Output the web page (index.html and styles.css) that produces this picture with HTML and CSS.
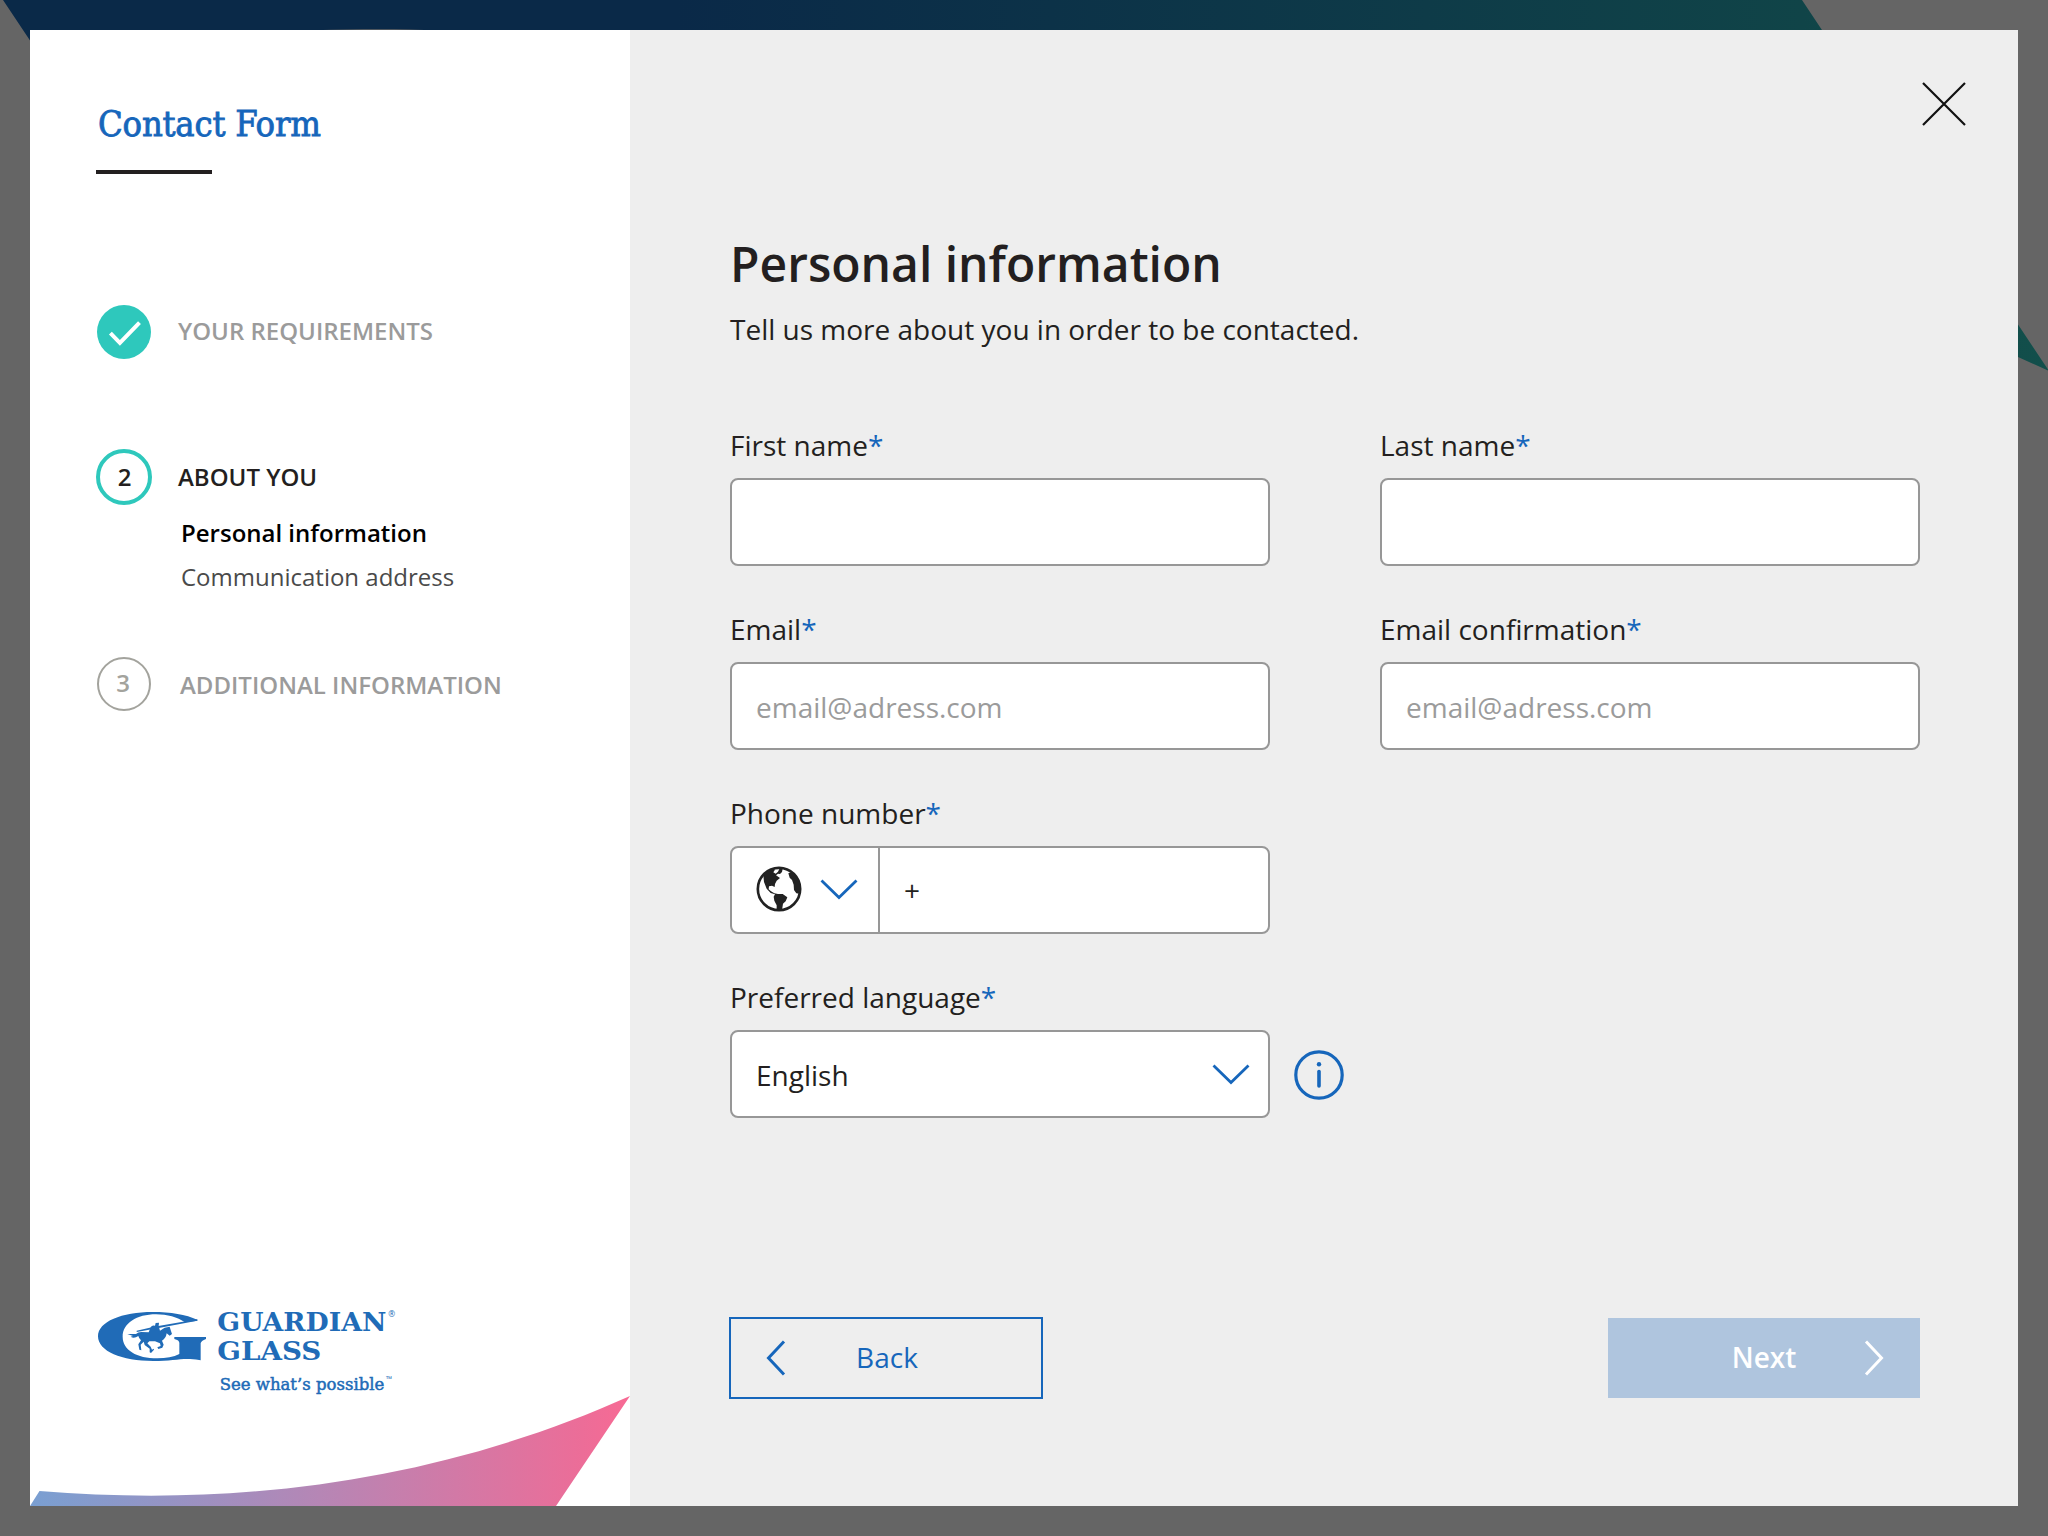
FILE: index.html
```html
<!DOCTYPE html>
<html lang="en">
<head>
<meta charset="utf-8">
<title>Contact Form</title>
<link rel="stylesheet" href="styles.css">
</head>
<body>
<svg class="backdrop" viewBox="0 0 2048 1536" aria-hidden="true">
  <defs>
    <linearGradient id="band" gradientUnits="userSpaceOnUse" x1="0" y1="0" x2="2048" y2="0">
      <stop offset="0" stop-color="#0a2948"/>
      <stop offset=".33" stop-color="#0a2948"/>
      <stop offset=".88" stop-color="#104448"/>
      <stop offset="1" stop-color="#124f4b"/>
    </linearGradient>
  </defs>
  <path fill="url(#band)" d="M3 0H1802L2049 371L2018 357C1500 150 700 29.2 380 29.2C250 29.2 150 40 33 45Z"/>
</svg>

<div class="modal">
  <aside class="sidebar">
    <h1 class="brand-title">Contact Form</h1>
    <div class="rule"></div>

    <ol class="steps">
      <li class="step step-done">
        <svg class="badge" viewBox="0 0 56 56"><circle cx="28" cy="28" r="27" fill="#2ec8bc"/><path d="M14.400 29.200L23.900 38.800L43.500 18.600" fill="none" stroke="#fff" stroke-width="4"/></svg>
        <span class="step-label">YOUR REQUIREMENTS</span>
      </li>
      <li class="step step-current">
        <span class="badge badge-current">2</span>
        <span class="step-label">ABOUT YOU</span>
      </li>
      <li class="substeps">
        <span class="substep substep-active">Personal information</span>
        <span class="substep">Communication address</span>
      </li>
      <li class="step step-next">
        <span class="badge badge-next">3</span>
        <span class="step-label">ADDITIONAL INFORMATION</span>
      </li>
    </ol>

    <svg class="logo" viewBox="0 0 1020 360" role="img" aria-label="Guardian Glass">
      <g fill="#206bb7">
        <path d="M352 89C318 74 272 66 218 66C125 66 54 95 54 139C54 184 125 213 220 213C270 213 305 205 330 207Q350 208 362 211V160Q363 153 378 147V141H283V147Q298 150 298 159V192Q272 205 232 205C170 205 128 180 128 140C128 100 170 73 228 73C262 73 292 81 315 97L352 92Z"/>
        <path d="M170 122L222 110L352 88V92L236 114L170 126Z"/>
        <path d="M142 132Q158 132 168 132Q174 126 184 126L206 127L212 112Q216 104 225 107L227 99L237 98L236 108L240 122L254 113L269 110L272 120L276 132L269 137L260 130Q258 145 246 152L251 164L247 173L235 177L232 172L242 168L240 160L225 154L208 154L202 160L212 170L216 179L221 176L222 179L213 189L209 187L209 176L194 165L191 155L182 164L184 181L178 179L175 163L183 151Q176 143 175 138Q162 147 152 140L159 138Z"/>
        <g font-family="'DejaVu Serif'" font-weight="700">
          <text x="412" y="124" font-size="78" textLength="507" lengthAdjust="spacingAndGlyphs">GUARDIAN</text>
          <text x="412" y="211" font-size="78" textLength="312" lengthAdjust="spacingAndGlyphs">GLASS</text>
        </g>
        <text x="925" y="82" font-size="25" font-family="'Open Sans'">®</text>
        <text x="419" y="300" font-size="52" font-family="'DejaVu Serif'" stroke="#206bb7" stroke-width="1.500" textLength="494" lengthAdjust="spacingAndGlyphs">See what’s possible</text>
        <text x="918" y="275" font-size="24" font-family="'Open Sans'">™</text>
      </g>
    </svg>

    <svg class="swoosh" viewBox="0 0 600 112" aria-hidden="true">
      <defs>
        <linearGradient id="sweep" x1="0" y1="0" x2="1" y2="0">
          <stop offset="0" stop-color="#7a9fd2"/>
          <stop offset=".05" stop-color="#7f9dcf"/>
          <stop offset=".5" stop-color="#b885b4"/>
          <stop offset=".92" stop-color="#ec6d98"/>
          <stop offset="1" stop-color="#f86a94"/>
        </linearGradient>
      </defs>
      <path fill="url(#sweep)" d="M0 112L9.500 97C215 114 415 85 600 2L526 112Z"/>
    </svg>
  </aside>

  <main class="content">
    <button class="close" type="button" aria-label="Close">
      <svg viewBox="0 0 46 46"><path d="M2 2L44 44M44 2L2 44" stroke="#111" stroke-width="2.200" fill="none"/></svg>
    </button>

    <h2 class="heading">Personal information</h2>
    <p class="intro">Tell us more about you in order to be contacted.</p>

    <form class="form">
      <div class="field">
        <label class="label" for="first">First name<span class="req">*</span></label>
        <input class="box" id="first" type="text">
      </div>
      <div class="field">
        <label class="label" for="last">Last name<span class="req">*</span></label>
        <input class="box" id="last" type="text">
      </div>
      <div class="field">
        <label class="label" for="email">Email<span class="req">*</span></label>
        <input class="box" id="email" type="text" placeholder="email@adress.com">
      </div>
      <div class="field">
        <label class="label" for="email2">Email confirmation<span class="req">*</span></label>
        <input class="box" id="email2" type="text" placeholder="email@adress.com">
      </div>
      <div class="field field-left">
        <span class="label">Phone number<span class="req">*</span></span>
        <div class="box phone">
          <div class="country">
            <svg class="globe" viewBox="18 16 138 138">
              <circle cx="87" cy="85" r="63.500" fill="#fff" stroke="#222" stroke-width="8"/>
              <path fill="#222" d="M40 44L60 28L76 26L70 35L77 39L84 33L88 25L98 24L96 34L90 40L84 39L78 44L90 52L80 60L75 70L74 79L66 75L57 77L56 86L63 92L73 98L84 100L98 100L112 110L107 122L99 129L96 148L80 149L80 134L73 120L71 108L75 101L62 97L50 84L42 64Z"/>
              <path fill="#222" d="M115 38Q122 33 130 38L146 56L151 84L148 99L139 98L132 88L131 72L126 58L119 51Z"/>
            </svg>
            <svg class="chevron" viewBox="0 0 38 22"><path d="M1.500 1.500L19 18.500L36.500 1.500" fill="none" stroke="#1666bb" stroke-width="2.800"/></svg>
          </div>
          <span class="prefix">+</span>
        </div>
      </div>
      <div class="field field-left">
        <span class="label">Preferred language<span class="req">*</span></span>
        <div class="select-row">
          <div class="box select">
            <span>English</span>
            <svg class="chevron" viewBox="0 0 38 22"><path d="M1.500 1.500L19 18.500L36.500 1.500" fill="none" stroke="#1666bb" stroke-width="2.800"/></svg>
          </div>
          <svg class="info" viewBox="0 0 50 50"><circle cx="25" cy="25" r="23.200" fill="none" stroke="#1666bb" stroke-width="3.200"/><circle cx="25" cy="14.200" r="2.200" fill="#1666bb"/><path d="M25 21.500V36" stroke="#1666bb" stroke-width="3.600" stroke-linecap="round"/></svg>
        </div>
      </div>
    </form>

    <div class="actions">
      <button class="btn btn-back" type="button">
        <svg class="arrow arrow-back" viewBox="0 0 20 36"><path d="M18 1.500L2.500 18L18 34.500" fill="none" stroke="currentColor" stroke-width="3"/></svg>
        Back
      </button>
      <button class="btn btn-next" type="button">
        Next
        <svg class="arrow arrow-next" viewBox="0 0 20 36"><path d="M2 1.500L17.500 18L2 34.500" fill="none" stroke="currentColor" stroke-width="3"/></svg>
      </button>
    </div>
  </main>
</div>
</body>
</html>
```
FILE: styles.css
```css
* {
  box-sizing: border-box;
}

body {
  margin: 0;
  width: 2048px;
  height: 1536px;
  padding: 30px;
  overflow: hidden;
  background: #656565;
  color: #231f20;
  font-family: "Open Sans", "Noto Sans", sans-serif;
}

.backdrop {
  position: absolute;
  left: 0;
  top: 0;
  width: 2048px;
  height: 1536px;
}

.modal {
  position: relative;
  display: flex;
  width: 1988px;
  height: 1476px;
  background: #eee;
}

/* Sidebar */

.sidebar {
  position: relative;
  display: flex;
  flex-direction: column;
  width: 600px;
  padding: 74px 0 96px 66px;
  background: #fff;
}

.brand-title {
  margin: 0 0 26px 2px;
  font: 400 36px/40px "DejaVu Serif Condensed", "DejaVu Serif", serif;
  font-stretch: condensed;
  letter-spacing: -0.2px;
  color: #1666bb;
  -webkit-text-stroke: 0.8px #1666bb;
}

.rule {
  width: 116px;
  height: 4px;
  background: #231f20;
}

.steps {
  margin: 130px 0 0;
  padding: 0;
  list-style: none;
}

.step {
  display: flex;
  align-items: center;
  gap: 26px;
  height: 56px;
  font-size: 24px;
  font-weight: 600;
}

.step-done {
  margin-bottom: 89px;
  color: #9b9b9b;
}

.step-done .step-label {
  margin-top: -4px;
}

.step-current .step-label {
  margin-top: -2px;
}

.step-next {
  gap: 28px;
  margin-top: 57px;
  color: #9b9b9b;
}

.badge {
  display: flex;
  align-items: center;
  justify-content: center;
  width: 56px;
  height: 56px;
  border-radius: 50%;
}

.badge-current {
  border: 4px solid #2ec8bc;
  padding: 0 0 2px 1px;
}

.badge-next {
  width: 54px;
  height: 54px;
  margin: 0 1px;
  padding: 0 2px 3px 0;
  border: 2px solid #a3a39d;
  color: #a3a39d;
}

.substeps {
  display: flex;
  flex-direction: column;
  margin-top: 6px;
  padding-left: 85px;
  font-size: 24px;
  line-height: 44px;
}

.substep {
  color: #4a4a4a;
}

.substep-active {
  color: #000;
  font-weight: 600;
}

.logo {
  width: 340px;
  height: 120px;
  margin: auto 0 0 -16px;
}

.swoosh {
  position: absolute;
  left: 0;
  bottom: 0;
  width: 600px;
  height: 112px;
}

/* Form */

.content {
  position: relative;
  flex: 1;
  padding: 204px 98px 0 100px;
}

.close {
  position: absolute;
  top: 51px;
  right: 51px;
  width: 46px;
  height: 46px;
  padding: 0;
  border: 0;
  background: none;
}

.close svg {
  display: block;
}

.heading {
  margin: 0;
  font-size: 48px;
  font-weight: 600;
  line-height: 60px;
}

.intro {
  margin: 15px 0 76px;
  font-size: 28px;
  line-height: 40px;
}

.form {
  display: grid;
  grid-template-columns: 540px 540px;
  gap: 43px 110px;
}

.field {
  display: flex;
  flex-direction: column;
  gap: 13px;
}

.field-left {
  grid-column: 1;
}

.label {
  font-size: 28px;
  line-height: 40px;
}

.req {
  color: #1666bb;
}

.box {
  flex: none;
  width: 540px;
  height: 88px;
  padding: 2px 24px 0;
  border: 2px solid #979797;
  border-radius: 8px;
  background: #fff;
  color: #231f20;
  font: 400 28px "Open Sans", "Noto Sans", sans-serif;
}

.box::placeholder {
  color: #9b9b9b;
  opacity: 1;
}

.phone {
  display: flex;
  padding: 0;
}

.country {
  display: flex;
  align-items: center;
  gap: 18px;
  width: 148px;
  padding: 0 0 2px 24px;
  border-right: 2px solid #979797;
}

.globe {
  width: 46px;
  height: 46px;
}

.chevron {
  width: 38px;
  height: 22px;
}

.country .chevron {
  margin-top: 2px;
}

.prefix {
  padding-left: 24px;
  line-height: 84px;
}

.select-row {
  display: flex;
  align-items: center;
  gap: 24px;
}

.select {
  display: flex;
  align-items: center;
  justify-content: space-between;
  padding-right: 18px;
}

.select .chevron {
  margin-bottom: 1px;
}

.info {
  flex: none;
  width: 50px;
  height: 50px;
  margin-top: 2px;
}

/* Footer buttons */

.actions {
  display: flex;
  align-items: center;
  justify-content: space-between;
  margin: 199px 0 0 -1px;
}

.btn {
  position: relative;
  padding: 0 0 2px;
  border: 0;
  font: 400 28px "Open Sans", "Noto Sans", sans-serif;
}

.btn-back {
  width: 314px;
  height: 82px;
  padding-left: 2px;
  border: 2px solid #1666bb;
  background: transparent;
  color: #1666bb;
}

.btn-next {
  width: 312px;
  height: 80px;
  background: #afc5de;
  color: #fff;
  font-weight: 600;
}

.arrow {
  position: absolute;
  top: 50%;
  width: 20px;
  height: 36px;
  margin-top: -18px;
}

.arrow-back {
  left: 35px;
}

.arrow-next {
  right: 36px;
}
```
